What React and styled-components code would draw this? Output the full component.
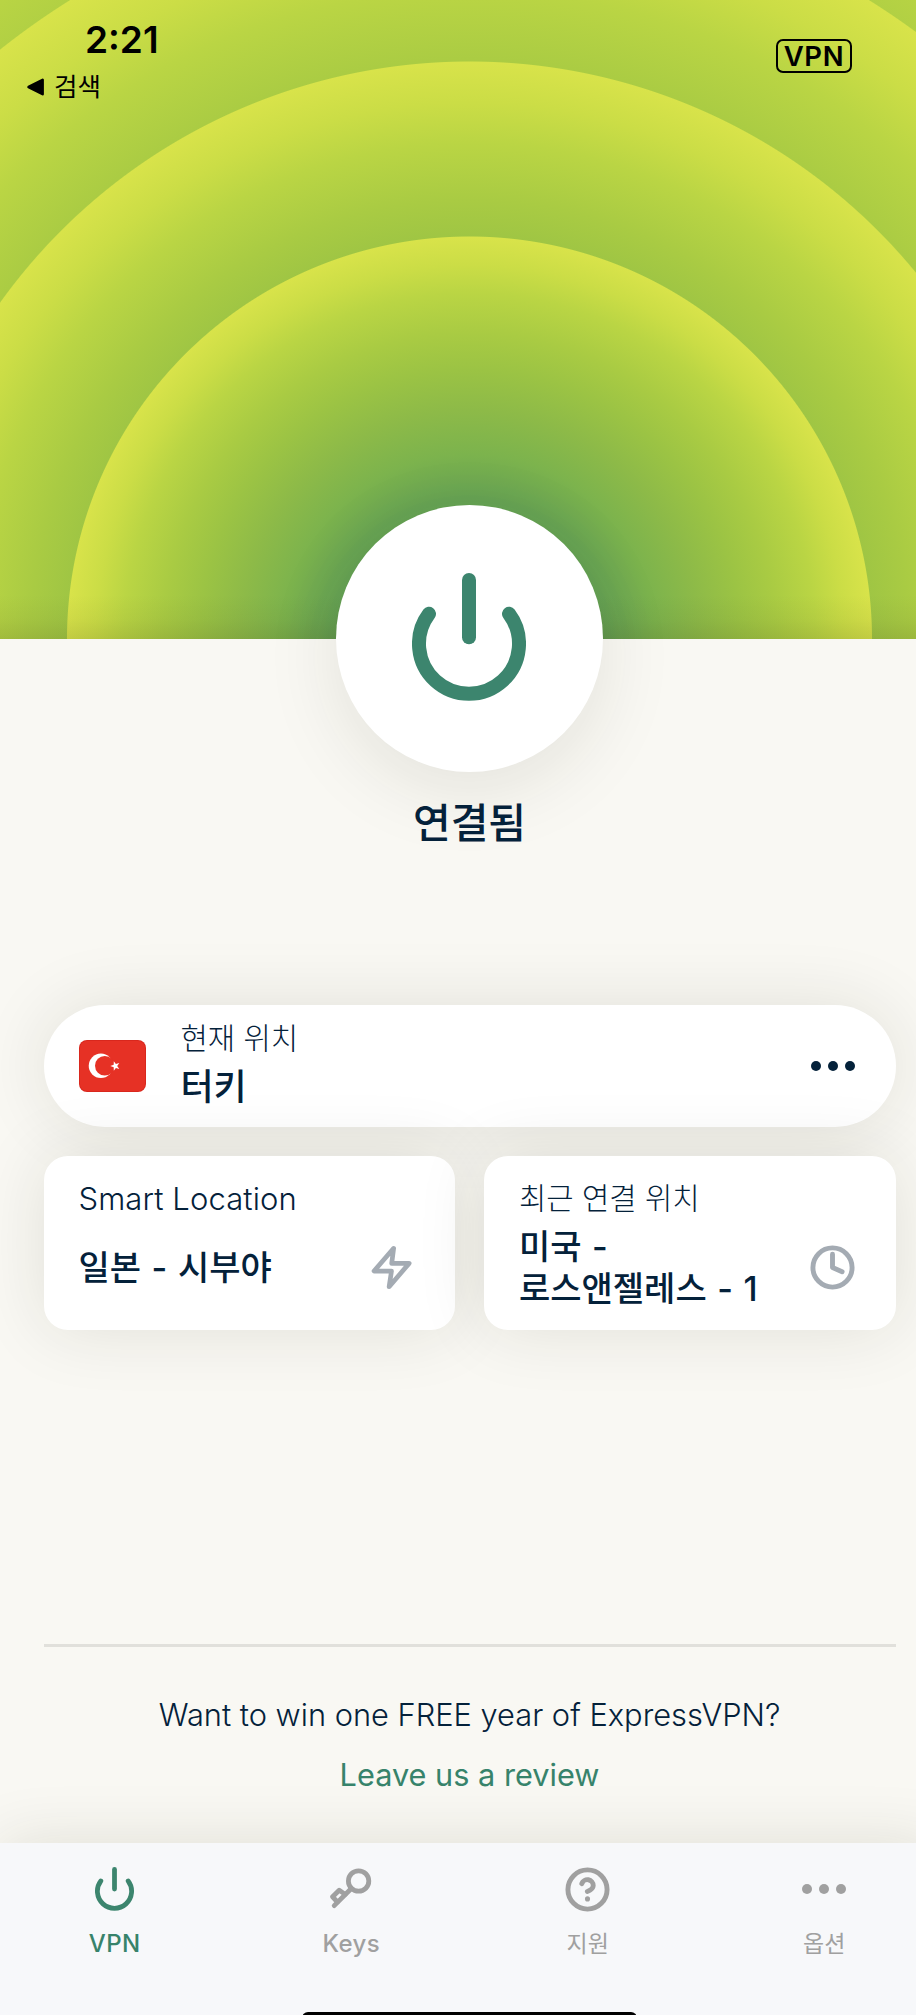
import React from "react";
import styled, { createGlobalStyle, css } from "styled-components";

const GlobalStyle = createGlobalStyle`
  * {
    box-sizing: border-box;
  }

  body {
    margin: 0;
    overflow: hidden;
    background: #f9f8f3;
    font-family: Inter, "Noto Sans CJK KR", sans-serif;
    color: #04213a;
  }
`;

const tabs = [
  { label: "VPN", icon: PowerIcon, active: true, spacing: 0.4 },
  { label: "Keys", icon: KeyIcon, spacing: 0.4 },
  { label: "지원", icon: HelpIcon, korean: true },
  { label: "옵션", icon: DotsIcon, korean: true },
];

function App() {
  return (
    <Screen>
      <GlobalStyle />
      <Hero>
        <StatusBar>
          <div>
            <Time>2:21</Time>
            <BackLink>
              <svg width="17" height="18" viewBox="0 0 17 18">
                <path
                  d="M1.6 9 L15.6 1.8 V16.2 Z"
                  fill="#000"
                  stroke="#000"
                  strokeWidth="2.6"
                  strokeLinejoin="round"
                />
              </svg>
              검색
            </BackLink>
          </div>
          <VpnBadge>VPN</VpnBadge>
        </StatusBar>
      </Hero>

      <Connection>
        <PowerButton>
          <PowerIcon size={114} />
        </PowerButton>
        <StatusText>연결됨</StatusText>
      </Connection>

      <Locations>
        <CurrentLocation>
          <TurkeyFlag />
          <CurrentText>
            <Label>현재 위치</Label>
            <Place $current>터키</Place>
          </CurrentText>
          <DotsIcon />
        </CurrentLocation>

        <Card>
          <Label $latin>Smart Location</Label>
          <CardRow>
            <Place>일본 - 시부야</Place>
            <BoltIcon />
          </CardRow>
        </Card>

        <Card>
          <Label>최근 연결 위치</Label>
          <CardRow>
            <Place>
              미국 -<br />
              로스앤젤레스 - 1
            </Place>
            <ClockIcon />
          </CardRow>
        </Card>
      </Locations>

      <Promo>
        <PromoText>Want to win one FREE year of ExpressVPN?</PromoText>
        <ReviewLink>Leave us a review</ReviewLink>
      </Promo>

      <TabBar>
        {tabs.map(({ label, icon: Icon, active, korean, spacing }) => (
          <Tab key={label} $active={active}>
            <TabIcon>
              <Icon size={39} />
            </TabIcon>
            <TabLabel $korean={korean} $spacing={spacing}>
              {label}
            </TabLabel>
          </Tab>
        ))}
        <HomeIndicator />
      </TabBar>
    </Screen>
  );
}

export default App;

/* icons */

function PowerIcon({ size }) {
  return (
    <svg
      width={size}
      height={(size * 128) / 114}
      viewBox="0 0 114 128"
      fill="none"
      stroke="#3c856e"
      strokeWidth="14"
      strokeLinecap="round"
    >
      <path d="M57 7 V64.3" />
      <path d="M17 40.8 A50 50 0 1 0 97 40.8" />
    </svg>
  );
}

function KeyIcon() {
  return (
    <svg
      width="42"
      height="42"
      viewBox="0 0 42 42"
      fill="none"
      stroke="currentColor"
      strokeWidth="4.8"
      strokeLinecap="round"
      strokeLinejoin="round"
    >
      <circle cx="28.6" cy="13" r="10.2" />
      <path d="M21.3 20.5 L4.2 37.6" />
      <path d="M15.2 26.4 L9.2 22.2 L2.6 28.8 L7.4 34" />
    </svg>
  );
}

function HelpIcon() {
  return (
    <svg
      width="47"
      height="47"
      viewBox="0 0 24 24"
      fill="none"
      stroke="currentColor"
      strokeWidth="2.5"
      strokeLinecap="round"
      strokeLinejoin="round"
    >
      <circle cx="12" cy="12" r="10" />
      <path d="M9.09 9a3 3 0 0 1 5.83 1c0 2-3 3-3 3" />
      <circle cx="12" cy="16.8" r="1.3" fill="currentColor" stroke="none" />
    </svg>
  );
}

function DotsIcon() {
  return (
    <svg width="44" height="12" viewBox="0 0 44 12" fill="currentColor">
      <circle cx="5" cy="6" r="5" />
      <circle cx="22" cy="6" r="5" />
      <circle cx="39" cy="6" r="5" />
    </svg>
  );
}

function BoltIcon() {
  return (
    <svg
      width="47"
      height="47"
      viewBox="0 0 24 24"
      fill="none"
      stroke="#a4abb3"
      strokeWidth="2.4"
      strokeLinecap="round"
      strokeLinejoin="round"
    >
      <path d="M13.1 2.2 L3.1 13.8 H12 L10.8 21.8 L21 9.9 H12.1 Z" />
    </svg>
  );
}

function ClockIcon() {
  return (
    <svg
      width="47"
      height="47"
      viewBox="0 0 24 24"
      fill="none"
      stroke="#a4abb3"
      strokeWidth="2.5"
      strokeLinecap="round"
      strokeLinejoin="round"
    >
      <circle cx="12" cy="12" r="10" />
      <path d="M12 5.2 V12 L16.9 14.2" />
    </svg>
  );
}

function TurkeyFlag() {
  return (
    <svg width="67" height="52" viewBox="0 0 67 52">
      <rect width="67" height="52" rx="8" fill="#d9271d" />
      <rect x="1" y="1" width="65" height="50" rx="7" fill="#e63125" />
      <circle cx="21.9" cy="25.8" r="12.2" fill="#fff" />
      <circle cx="25.8" cy="25.8" r="9.8" fill="#e63125" />
      <path
        d="M31.3 26 L34.7 24.8 L34.8 21.3 L36.9 24.1 L40.3 23.1 L38.2 26 L40.3 28.9 L36.9 27.9 L34.8 30.7 L34.7 27.2 Z"
        fill="#fff"
      />
    </svg>
  );
}

/* layout */

const Screen = styled.div`
  width: 939px;
  height: 2015px;
  display: flex;
  flex-direction: column;
  overflow: hidden;
`;

// one glowing disc, reused at every radius
const disc = (r) => {
  const at = (f) => `${Math.round(r * f)}px`;
  return `radial-gradient(
    circle at 50% 100%,
    #619f54 ${at(0.3)},
    #67a353 ${at(0.35)},
    #7cb34d ${at(0.46)},
    #8dba48 ${at(0.57)},
    #9bc344 ${at(0.67)},
    #a9cb43 ${at(0.76)},
    #bad544 ${at(0.86)},
    #cbdd46 ${at(0.93)},
    #d8e34a ${r}px,
    transparent ${r + 1}px
  )`;
};

const Hero = styled.header`
  flex: none;
  height: 639px;
  background: linear-gradient(
      to top,
      rgba(60, 60, 20, 0.14),
      rgba(60, 60, 20, 0.05) 20px,
      rgba(60, 60, 20, 0) 44px
    ),
    ${disc(402)}, ${disc(577)}, ${disc(753)}, ${disc(929)};
`;

const StatusBar = styled.div`
  display: flex;
  justify-content: space-between;
  align-items: flex-start;
  padding: 16px 87px 0 27px;
  color: #000;
`;

const Time = styled.div`
  padding-left: 58px;
  font-size: 37px;
  font-weight: 600;
  line-height: 48px;
`;

const BackLink = styled.div`
  display: flex;
  align-items: center;
  gap: 10px;
  margin-top: 4px;
  font-size: 25.5px;
  line-height: 38px;
`;

const VpnBadge = styled.div`
  width: 76px;
  height: 34px;
  margin-top: 23px;
  border: 2.5px solid #000;
  border-radius: 7px;
  font-size: 27.5px;
  font-weight: 600;
  line-height: 30px;
  text-align: center;
  letter-spacing: 0.7px;
`;

const Connection = styled.section`
  flex: none;
  display: flex;
  flex-direction: column;
  align-items: center;
  height: 366px;
`;

const PowerButton = styled.button`
  flex: none;
  display: flex;
  justify-content: center;
  width: 267px;
  height: 267px;
  margin-top: -134px;
  padding: 68px 2px 0 0;
  border: 0;
  border-radius: 50%;
  background: #fff;
  box-shadow: 0 18px 76px rgba(40, 40, 20, 0.1);
`;

const StatusText = styled.div`
  margin-top: 21px;
  font-size: 41px;
  font-weight: 500;
  line-height: 60px;
`;

const Locations = styled.section`
  flex: none;
  display: grid;
  grid-template-columns: 1fr 1fr;
  gap: 29px;
  height: 639px;
  align-content: start;
  padding: 0 43.5px;
`;

const panel = css`
  background: #fff;
  box-shadow: 0 0 70px rgba(40, 40, 20, 0.11);
`;

const CurrentLocation = styled.div`
  ${panel}
  grid-column: 1 / -1;
  display: flex;
  align-items: center;
  height: 121.5px;
  padding: 0 41px 0 35px;
  border-radius: 61px;
`;

const CurrentText = styled.div`
  flex: 1;
  margin: -7px 0 0 35px;
`;

const Card = styled.div`
  ${panel}
  height: 174.5px;
  padding: 21px 40px 0 35px;
  border-radius: 24px;
`;

const CardRow = styled.div`
  display: flex;
  align-items: center;
  justify-content: space-between;
  height: 84px;
  margin-top: 7px;
`;

const Label = styled.div`
  font-size: ${(p) => (p.$latin ? 31 : 29.7)}px;
  font-weight: 300;
  line-height: ${(p) => (p.$latin ? 44 : 42)}px;
  letter-spacing: ${(p) => (p.$latin ? 0.1 : 0)}px;
  ${(p) => p.$latin && "margin-bottom: -2px;"}
`;

const Place = styled.div`
  font-size: ${(p) => (p.$current ? 36 : 34)}px;
  font-weight: 500;
  line-height: 42px;
  white-space: nowrap;
  word-spacing: 1.5px;
  ${(p) => p.$current && "margin-top: 7px;"}
`;

const Promo = styled.section`
  flex: 1;
  margin: 0 43.5px;
  padding-top: 48px;
  border-top: 3px solid #e1e0db;
  text-align: center;
`;

const PromoText = styled.p`
  margin: 0;
  font-size: 30.8px;
  font-weight: 300;
  line-height: 40px;
`;

const ReviewLink = styled.a`
  display: block;
  margin-top: 20px;
  font-size: 30.7px;
  line-height: 40px;
  color: #37836b;
`;

const TabBar = styled.nav`
  flex: none;
  position: relative;
  display: grid;
  grid-template-columns: repeat(4, 236.5px);
  justify-content: center;
  height: 172px;
  background: #f7f8fa;
  box-shadow: 0 0 64px rgba(40, 40, 20, 0.12);
`;

const Tab = styled.div`
  display: flex;
  flex-direction: column;
  align-items: center;
  padding-top: 22px;
  color: ${(p) => (p.$active ? "#37836b" : "#a0a0a0")};
`;

const TabIcon = styled.div`
  display: flex;
  align-items: center;
  height: 48px;
`;

const TabLabel = styled.div`
  margin-top: 16px;
  font-size: ${(p) => (p.$korean ? 23 : 24)}px;
  font-weight: ${(p) => (p.$korean ? 400 : 500)};
  line-height: 30px;
  letter-spacing: ${(p) => p.$spacing || 0}px;
`;

// only its upper edge shows above the fold
const HomeIndicator = styled.div`
  position: absolute;
  left: 302px;
  top: 169px;
  width: 335px;
  height: 12px;
  border-radius: 6px;
  background: #000;
`;
